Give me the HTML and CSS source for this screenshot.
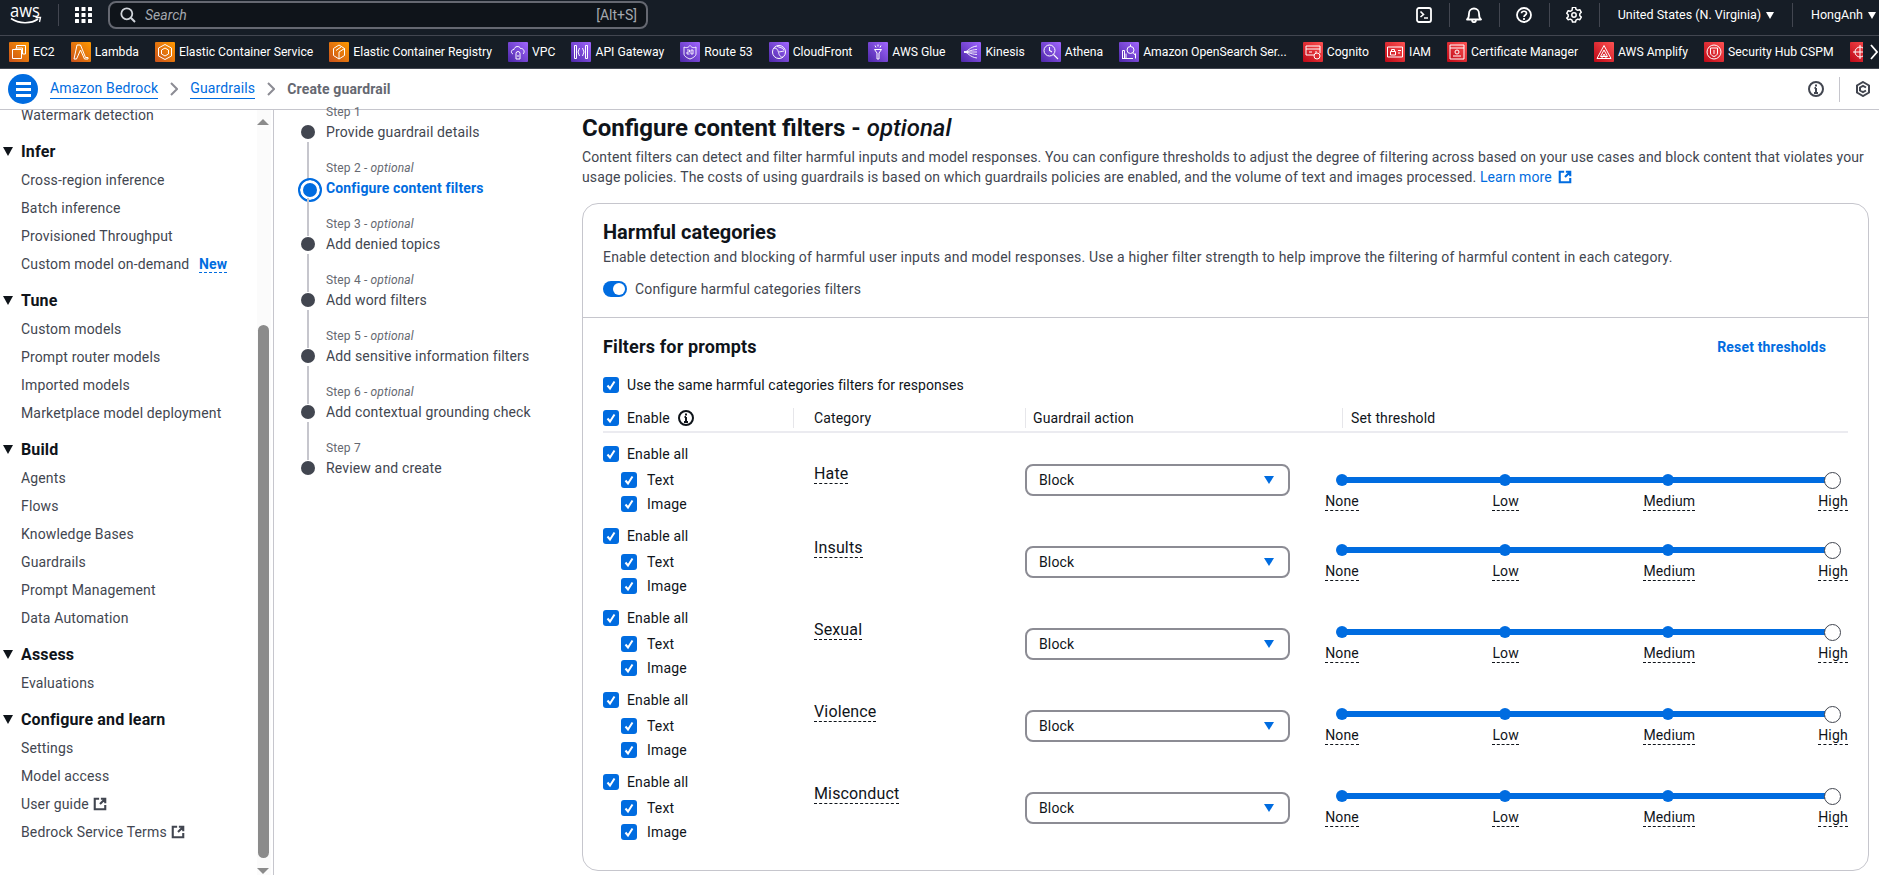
FILE: index.html
```html
<!DOCTYPE html>
<html lang="en">
<head>
    <meta charset="UTF-8">
    <meta name="viewport" content="width=device-width, initial-scale=1.0">
    <title>Create guardrail</title>
    <link rel="stylesheet" href="styles.css">
</head>
<body>
    <svg class="defs" width="0" height="0">
        <defs>
            <linearGradient id="orange" x1="0" y1="1" x2="1" y2="0"><stop offset="0" stop-color="#c8511b"/><stop offset="1" stop-color="#ff9900"/></linearGradient>
            <linearGradient id="purple" x1="0" y1="1" x2="1" y2="0"><stop offset="0" stop-color="#4d27a8"/><stop offset="1" stop-color="#a166ff"/></linearGradient>
            <linearGradient id="red" x1="0" y1="1" x2="1" y2="0"><stop offset="0" stop-color="#bd0816"/><stop offset="1" stop-color="#ff5252"/></linearGradient>
            <symbol id="check" viewBox="0 0 16 16"><rect width="16" height="16" rx="3" fill="#006ce0"/><path d="M4.500 8.500 7 11.500 11.500 4.500" fill="none" stroke="#fff" stroke-width="2"/></symbol>
            <symbol id="ext" viewBox="0 0 16 16"><path d="M7 2H2v12h12V9M9 2h5v5M14 2 8 8" fill="none" stroke="currentColor" stroke-width="2.400"/></symbol>
            <symbol id="info" viewBox="0 0 16 16"><circle cx="8" cy="8" r="7" fill="none" stroke="currentColor" stroke-width="2"/><path d="M8 7v5M6 12h4M6.500 7H8M8 3.500v2" fill="none" stroke="currentColor" stroke-width="2"/></symbol>
        </defs>
    </svg>

    <header class="topnav">
        <svg class="logo" viewBox="0 0 32 20" width="32" height="20">
            <text x="0" y="11.500" class="logo-text" textLength="30" lengthAdjust="spacingAndGlyphs">aws</text>
            <path d="M1 13.500c8 5.500 20 5.500 27 .5" fill="none" stroke="#fff" stroke-width="1.600"/>
            <path d="M25.500 12.500 30.500 12.500 29.500 17" fill="none" stroke="#fff" stroke-width="1.300"/>
        </svg>
        <span class="nav-sep"></span>
        <svg class="grid-icon" viewBox="0 0 17 16" width="17" height="16" fill="#fff">
            <rect width="4" height="4" rx=".5"/><rect x="6.500" width="4" height="4" rx=".5"/><rect x="13" width="4" height="4" rx=".5"/>
            <rect y="6" width="4" height="4" rx=".5"/><rect x="6.500" y="6" width="4" height="4" rx=".5"/><rect x="13" y="6" width="4" height="4" rx=".5"/>
            <rect y="12" width="4" height="4" rx=".5"/><rect x="6.500" y="12" width="4" height="4" rx=".5"/><rect x="13" y="12" width="4" height="4" rx=".5"/>
        </svg>
        <div class="search">
            <svg viewBox="0 0 16 16" width="16" height="16"><circle cx="6.800" cy="6.800" r="5.500" fill="none" stroke="#d1d5db" stroke-width="1.800"/><path d="M10.800 10.800 15 15" stroke="#d1d5db" stroke-width="2"/></svg>
            <span class="search-text">Search</span>
            <span class="search-key">[Alt+S]</span>
        </div>
        <div class="nav-right">
            <svg class="nav-icon" viewBox="0 0 16 16" width="16" height="16"><rect x="1" y="1" width="14" height="14" rx="2" fill="none" stroke="#fff" stroke-width="1.800"/><path d="M4.500 4.500 7.500 7.500 4.500 10M8 11h4" fill="none" stroke="#fff" stroke-width="1.600"/></svg>
            <span class="nav-sep tall"></span>
            <svg class="nav-icon" viewBox="0 0 16 16" width="16" height="16"><path d="M1 12.500c2-1.500 2-3 2-6a5 5 0 0 1 10 0c0 3 0 4.500 2 6zM6 13c0 3 4 3 4 0" fill="none" stroke="#fff" stroke-width="1.800" stroke-linejoin="round"/></svg>
            <span class="nav-sep tall"></span>
            <svg class="nav-icon" viewBox="0 0 16 16" width="16" height="16"><circle cx="8" cy="8" r="7" fill="none" stroke="#fff" stroke-width="1.800"/><path d="M5.500 6.300C5.700 3.500 10.500 3.700 10.500 6.300 10.500 8 8 8 8 10M8 11v2" fill="none" stroke="#fff" stroke-width="1.700"/></svg>
            <span class="nav-sep tall"></span>
            <svg class="nav-icon" viewBox="0 0 16 16" width="16" height="16"><path d="M6.500 1h3l.5 2 1.800 1 2-.6 1.500 2.600-1.500 1.400v2l1.500 1.400-1.500 2.600-2-.6-1.800 1-.5 2h-3l-.5-2-1.800-1-2 .6L.7 11.800l1.500-1.400v-2L.7 7 2.200 4.400l2 .6L6 4z" transform="translate(0 -.7)" fill="none" stroke="#fff" stroke-width="1.500" stroke-linejoin="round"/><circle cx="8" cy="8" r="2.200" fill="none" stroke="#fff" stroke-width="1.500"/></svg>
            <span class="nav-sep tall"></span>
            <span class="nav-label">United States (N. Virginia)</span><span class="caret"></span>
            <span class="nav-sep tall"></span>
            <span class="nav-label">HongAnh</span><span class="caret"></span>
        </div>
    </header>

    <nav class="shortcuts">
        <a class="shortcut"><svg viewBox="0 0 20 20" width="20" height="20"><rect width="20" height="20" rx="1" fill="url(#orange)"/><path d="M7.500 6V3.500h9v8.500h-3M3.500 7.500h9v9h-9zM7 7.500V6h6.500v6" fill="none" stroke="#fff" stroke-width="1"/></svg>EC2</a>
        <a class="shortcut"><svg viewBox="0 0 20 20" width="20" height="20"><rect width="20" height="20" rx="1" fill="url(#orange)"/><path d="M6 3h3.500l5 12.500H17V17h-3.500L9.500 8 5.500 17H3z" fill="none" stroke="#fff" stroke-width="1"/></svg>Lambda</a>
        <a class="shortcut"><svg viewBox="0 0 20 20" width="20" height="20"><rect width="20" height="20" rx="1" fill="url(#orange)"/><path d="M10 2.500 16.500 6v8L10 17.500 3.500 14V6zM10 6 13.500 8v4L10 14l-3.500-2V8z" fill="none" stroke="#fff" stroke-width="1"/></svg>Elastic Container Service</a>
        <a class="shortcut"><svg viewBox="0 0 20 20" width="20" height="20"><rect width="20" height="20" rx="1" fill="url(#orange)"/><path d="M10 3 15.500 6.500v7L10 17l-5.500-3.500v-7zM10 10v7M10 10l5.500-3.500M7 8.500 12 5" fill="none" stroke="#fff" stroke-width="1"/></svg>Elastic Container Registry</a>
        <a class="shortcut"><svg viewBox="0 0 20 20" width="20" height="20"><rect width="20" height="20" rx="1" fill="url(#purple)"/><path d="M5 12C2.500 11 3 7.500 6 7.500 6.500 4 11.500 3.500 12.500 6.500 15.500 6 17.500 10 15 12M8 17V11.500a2 2 0 0 1 4 0V17zM10 13v2" fill="none" stroke="#fff" stroke-width="1"/></svg>VPC</a>
        <a class="shortcut"><svg viewBox="0 0 20 20" width="20" height="20"><rect width="20" height="20" rx="1" fill="url(#purple)"/><path d="M3.500 3.500h2v13h-2zM14.500 3.500h2v13h-2zM8.500 6l-1.500 4 1.500 4M11.500 6l1.500 4-1.500 4" fill="none" stroke="#fff" stroke-width="1"/></svg>API Gateway</a>
        <a class="shortcut"><svg viewBox="0 0 20 20" width="20" height="20"><rect width="20" height="20" rx="1" fill="url(#purple)"/><path d="M4 5c2 1 4 1 6-1.500 2 2.500 4 2.500 6 1.500v7c0 2-3 4-6 5-3-1-6-3-6-5zM7 8h2.500v2H7v2h2.500M11 8h2v4h-2z" fill="none" stroke="#fff" stroke-width=".9"/></svg>Route 53</a>
        <a class="shortcut"><svg viewBox="0 0 20 20" width="20" height="20"><rect width="20" height="20" rx="1" fill="url(#purple)"/><circle cx="10" cy="10" r="6.500" fill="none" stroke="#fff"/><path d="M5 6c3 0 4 2 4.500 4.500S12 16 14 15M8 4c2 2 6 1 7 4M10 10l5-1" fill="none" stroke="#fff" stroke-width=".9"/></svg>CloudFront</a>
        <a class="shortcut"><svg viewBox="0 0 20 20" width="20" height="20"><rect width="20" height="20" rx="1" fill="url(#purple)"/><path d="M6.500 7.500h7l-2.500 3.500v6H9v-6zM10 2.500v2M7 3.500l1 2M13 3.500l-1 2" fill="none" stroke="#fff" stroke-width="1"/></svg>AWS Glue</a>
        <a class="shortcut"><svg viewBox="0 0 20 20" width="20" height="20"><rect width="20" height="20" rx="1" fill="url(#purple)"/><path d="M3 10c4 0 5-5 13-6M3 10c4 0 6-2 13-2.500M3 10h13M3 10c4 0 6 2 13 2.500M3 10c4 0 5 5 13 6" fill="none" stroke="#fff" stroke-width=".9"/></svg>Kinesis</a>
        <a class="shortcut"><svg viewBox="0 0 20 20" width="20" height="20"><rect width="20" height="20" rx="1" fill="url(#purple)"/><circle cx="8.500" cy="8.500" r="5.500" fill="none" stroke="#fff"/><path d="M12.500 12.500 17 17M8.500 5v3.500l2.500 1.500" fill="none" stroke="#fff" stroke-width="1.100"/></svg>Athena</a>
        <a class="shortcut"><svg viewBox="0 0 20 20" width="20" height="20"><rect width="20" height="20" rx="1" fill="url(#purple)"/><path d="M3.500 16.500v-8h2v8zM7 16.500v-5M14 16.500h-11M16.500 16.500v-5" fill="none" stroke="#fff"/><circle cx="11.500" cy="8" r="3.500" fill="none" stroke="#fff"/><path d="M11.500 2.500v2M14 10.500l2.500 3" fill="none" stroke="#fff"/></svg>Amazon OpenSearch Ser...</a>
        <a class="shortcut"><svg viewBox="0 0 20 20" width="20" height="20"><rect width="20" height="20" rx="1" fill="url(#red)"/><path d="M11 13H3V4h14v7M3 7h14M6 10h3M12 10h2" fill="none" stroke="#fff"/><circle cx="14" cy="14" r="3" fill="none" stroke="#fff"/></svg>Cognito</a>
        <a class="shortcut"><svg viewBox="0 0 20 20" width="20" height="20"><rect width="20" height="20" rx="1" fill="url(#red)"/><path d="M2.500 5h15v10h-15zM5.500 9.500h5V13h-5zM6.500 9.500V7.500h3v2M13 8.500h3M13 11h2" fill="none" stroke="#fff"/></svg>IAM</a>
        <a class="shortcut"><svg viewBox="0 0 20 20" width="20" height="20"><rect width="20" height="20" rx="1" fill="url(#red)"/><path d="M3 3h14v14H3zM3 6h14M6 14h8" fill="none" stroke="#fff"/><circle cx="10" cy="10" r="2" fill="none" stroke="#fff"/></svg>Certificate Manager</a>
        <a class="shortcut"><svg viewBox="0 0 20 20" width="20" height="20"><rect width="20" height="20" rx="1" fill="url(#red)"/><path d="M10 3.500 17 16.500H3zM10 8l-3.500 6.500h7zM7.500 16.500l2.500-4.500 2.500 4.500" fill="none" stroke="#fff"/></svg>AWS Amplify</a>
        <a class="shortcut"><svg viewBox="0 0 20 20" width="20" height="20"><rect width="20" height="20" rx="1" fill="url(#red)"/><circle cx="10" cy="10" r="7" fill="none" stroke="#fff"/><path d="M6.500 6h7v5c0 2-2 3-3.500 3.500C8.500 14 6.500 13 6.500 11zM10 8v4" fill="none" stroke="#fff"/></svg>Security Hub CSPM</a>
        <div class="shortcut-end">
            <svg class="shortcut-cut" viewBox="0 0 13 20" width="13" height="20"><rect width="20" height="20" rx="1" fill="url(#red)"/><circle cx="10" cy="10" r="5" fill="none" stroke="#fff"/><path d="M3 10h14M10 3v14" fill="none" stroke="#fff"/></svg>
            <svg class="shortcut-next" viewBox="0 0 8 16" width="8" height="16"><path d="M1 1l6 7-6 7" fill="none" stroke="#fff" stroke-width="1.800"/></svg>
        </div>
    </nav>

    <div class="crumbbar">
        <button class="menu-btn"><span></span><span></span><span></span></button>
        <a class="crumb">Amazon Bedrock</a>
        <svg class="crumb-sep" viewBox="0 0 8 14" width="8" height="14"><path d="M1 1l6 6-6 6" fill="none" stroke="#8c8c94" stroke-width="2"/></svg>
        <a class="crumb">Guardrails</a>
        <svg class="crumb-sep" viewBox="0 0 8 14" width="8" height="14"><path d="M1 1l6 6-6 6" fill="none" stroke="#8c8c94" stroke-width="2"/></svg>
        <span class="crumb-current">Create guardrail</span>
        <div class="crumb-tools">
            <svg class="tool-icon" width="16" height="16"><use href="#info"/></svg>
            <span class="tool-sep"></span>
            <svg class="tool-icon" viewBox="0 0 16 16" width="16" height="16"><path d="M8 1 14 4.500v7L8 15l-6-3.500v-7z" fill="none" stroke="currentColor" stroke-width="2"/><path d="M11 6.500 8 4.800 5 6.500v3L8 11.200l3-1.700" fill="none" stroke="currentColor" stroke-width="2"/></svg>
        </div>
    </div>

    <div class="layout">
        <aside class="sidebar">
            <div class="side-scroll">
                <a class="side-item">Watermark detection</a>
                <h3 class="side-head">Infer</h3>
                <a class="side-item">Cross-region inference</a>
                <a class="side-item">Batch inference</a>
                <a class="side-item">Provisioned Throughput</a>
                <a class="side-item">Custom model on-demand <span class="new-tag">New</span></a>
                <h3 class="side-head">Tune</h3>
                <a class="side-item">Custom models</a>
                <a class="side-item">Prompt router models</a>
                <a class="side-item">Imported models</a>
                <a class="side-item">Marketplace model deployment</a>
                <h3 class="side-head">Build</h3>
                <a class="side-item">Agents</a>
                <a class="side-item">Flows</a>
                <a class="side-item">Knowledge Bases</a>
                <a class="side-item">Guardrails</a>
                <a class="side-item">Prompt Management</a>
                <a class="side-item">Data Automation</a>
                <h3 class="side-head">Assess</h3>
                <a class="side-item">Evaluations</a>
                <h3 class="side-head">Configure and learn</h3>
                <a class="side-item">Settings</a>
                <a class="side-item">Model access</a>
                <a class="side-item">User guide <svg class="ext-icon" width="14" height="14"><use href="#ext"/></svg></a>
                <a class="side-item">Bedrock Service Terms <svg class="ext-icon" width="14" height="14"><use href="#ext"/></svg></a>
            </div>
            <div class="scrollbar">
                <span class="scroll-up"></span>
                <span class="scroll-thumb"></span>
                <span class="scroll-down"></span>
            </div>
        </aside>

        <ol class="steps">
            <li class="step"><small>Step 1</small><div class="step-title">Provide guardrail details</div></li>
            <li class="step active"><small>Step 2 - <i>optional</i></small><div class="step-title">Configure content filters</div></li>
            <li class="step"><small>Step 3 - <i>optional</i></small><div class="step-title">Add denied topics</div></li>
            <li class="step"><small>Step 4 - <i>optional</i></small><div class="step-title">Add word filters</div></li>
            <li class="step"><small>Step 5 - <i>optional</i></small><div class="step-title">Add sensitive information filters</div></li>
            <li class="step"><small>Step 6 - <i>optional</i></small><div class="step-title">Add contextual grounding check</div></li>
            <li class="step last-step"><small>Step 7</small><div class="step-title">Review and create</div></li>
        </ol>

        <main class="content">
            <h1 class="page-title">Configure content filters - <i>optional</i></h1>
            <p class="page-desc">Content filters can detect and filter harmful inputs and model responses. You can configure thresholds to adjust the degree of filtering across based on your use cases and block content that violates your usage policies. The costs of using guardrails is based on which guardrails policies are enabled, and the volume of text and images processed. <a class="learn">Learn more <svg width="14" height="14"><use href="#ext"/></svg></a></p>

            <section class="card">
                <div class="card-top">
                    <h2 class="card-title">Harmful categories</h2>
                    <p class="card-desc">Enable detection and blocking of harmful user inputs and model responses. Use a higher filter strength to help improve the filtering of harmful content in each category.</p>
                    <div class="toggle-row"><span class="toggle"></span>Configure harmful categories filters</div>
                </div>
                <div class="card-body">
                    <div class="filters-head">
                        <h3 class="filters-title">Filters for prompts</h3>
                        <a class="reset">Reset thresholds</a>
                    </div>
                    <div class="check same"><svg class="cb" width="16" height="16"><use href="#check"/></svg>Use the same harmful categories filters for responses</div>
                    <div class="table-head">
                        <div class="check th-enable"><svg class="cb" width="16" height="16"><use href="#check"/></svg>Enable <svg class="th-info" width="16" height="16"><use href="#info"/></svg></div>
                        <div class="th-cell th-cat">Category</div>
                        <div class="th-cell th-act">Guardrail action</div>
                        <div class="th-cell th-set">Set threshold</div>
                    </div>

                    <div class="row row-first">
                        <div class="enable-col">
                            <div class="check"><svg class="cb" width="16" height="16"><use href="#check"/></svg>Enable all</div>
                            <div class="check sub"><svg class="cb" width="16" height="16"><use href="#check"/></svg>Text</div>
                            <div class="check sub"><svg class="cb" width="16" height="16"><use href="#check"/></svg>Image</div>
                        </div>
                        <div class="cat-col"><span class="dotted">Hate</span></div>
                        <div class="select">Block<span class="select-arrow"></span></div>
                        <div class="slider">
                            <div class="track"><span class="tick"></span><span class="tick"></span><span class="tick"></span><span class="knob"></span></div>
                            <div class="ticks"><span class="tick-label"><span class="dotted">None</span></span><span class="tick-label"><span class="dotted">Low</span></span><span class="tick-label"><span class="dotted">Medium</span></span><span class="tick-label"><span class="dotted">High</span></span></div>
                        </div>
                    </div>
                    <div class="row">
                        <div class="enable-col">
                            <div class="check"><svg class="cb" width="16" height="16"><use href="#check"/></svg>Enable all</div>
                            <div class="check sub"><svg class="cb" width="16" height="16"><use href="#check"/></svg>Text</div>
                            <div class="check sub"><svg class="cb" width="16" height="16"><use href="#check"/></svg>Image</div>
                        </div>
                        <div class="cat-col"><span class="dotted">Insults</span></div>
                        <div class="select">Block<span class="select-arrow"></span></div>
                        <div class="slider">
                            <div class="track"><span class="tick"></span><span class="tick"></span><span class="tick"></span><span class="knob"></span></div>
                            <div class="ticks"><span class="tick-label"><span class="dotted">None</span></span><span class="tick-label"><span class="dotted">Low</span></span><span class="tick-label"><span class="dotted">Medium</span></span><span class="tick-label"><span class="dotted">High</span></span></div>
                        </div>
                    </div>
                    <div class="row">
                        <div class="enable-col">
                            <div class="check"><svg class="cb" width="16" height="16"><use href="#check"/></svg>Enable all</div>
                            <div class="check sub"><svg class="cb" width="16" height="16"><use href="#check"/></svg>Text</div>
                            <div class="check sub"><svg class="cb" width="16" height="16"><use href="#check"/></svg>Image</div>
                        </div>
                        <div class="cat-col"><span class="dotted">Sexual</span></div>
                        <div class="select">Block<span class="select-arrow"></span></div>
                        <div class="slider">
                            <div class="track"><span class="tick"></span><span class="tick"></span><span class="tick"></span><span class="knob"></span></div>
                            <div class="ticks"><span class="tick-label"><span class="dotted">None</span></span><span class="tick-label"><span class="dotted">Low</span></span><span class="tick-label"><span class="dotted">Medium</span></span><span class="tick-label"><span class="dotted">High</span></span></div>
                        </div>
                    </div>
                    <div class="row">
                        <div class="enable-col">
                            <div class="check"><svg class="cb" width="16" height="16"><use href="#check"/></svg>Enable all</div>
                            <div class="check sub"><svg class="cb" width="16" height="16"><use href="#check"/></svg>Text</div>
                            <div class="check sub"><svg class="cb" width="16" height="16"><use href="#check"/></svg>Image</div>
                        </div>
                        <div class="cat-col"><span class="dotted">Violence</span></div>
                        <div class="select">Block<span class="select-arrow"></span></div>
                        <div class="slider">
                            <div class="track"><span class="tick"></span><span class="tick"></span><span class="tick"></span><span class="knob"></span></div>
                            <div class="ticks"><span class="tick-label"><span class="dotted">None</span></span><span class="tick-label"><span class="dotted">Low</span></span><span class="tick-label"><span class="dotted">Medium</span></span><span class="tick-label"><span class="dotted">High</span></span></div>
                        </div>
                    </div>
                    <div class="row">
                        <div class="enable-col">
                            <div class="check"><svg class="cb" width="16" height="16"><use href="#check"/></svg>Enable all</div>
                            <div class="check sub"><svg class="cb" width="16" height="16"><use href="#check"/></svg>Text</div>
                            <div class="check sub"><svg class="cb" width="16" height="16"><use href="#check"/></svg>Image</div>
                        </div>
                        <div class="cat-col"><span class="dotted">Misconduct</span></div>
                        <div class="select">Block<span class="select-arrow"></span></div>
                        <div class="slider">
                            <div class="track"><span class="tick"></span><span class="tick"></span><span class="tick"></span><span class="knob"></span></div>
                            <div class="ticks"><span class="tick-label"><span class="dotted">None</span></span><span class="tick-label"><span class="dotted">Low</span></span><span class="tick-label"><span class="dotted">Medium</span></span><span class="tick-label"><span class="dotted">High</span></span></div>
                        </div>
                    </div>
                </div>
            </section>
        </main>
    </div>
</body>
</html>
```

FILE: styles.css
```css
* {
    box-sizing: border-box;
}
html, body {
    height: 100%;
    overflow: hidden;
}
body {
    margin: 0;
    background-color: white;
    color: #0f141a;
    font-family: Roboto, "Noto Sans", sans-serif;
    font-size: 14px;
    line-height: 20px;
    letter-spacing: .15px;
}
.defs {
    position: absolute;
}

/* top nav */
.topnav {
    height: 35px;
    padding-bottom: 5px;
    background-color: #161d26;
    display: flex;
    align-items: center;
    color: white;
    letter-spacing: 0;
}
.logo {
    margin-left: 10px;
    flex: none;
    overflow: visible;
}
.logo-text {
    fill: white;
    font-size: 19px;
    font-family: "Open Sans", sans-serif;
}
.nav-sep {
    width: 1px;
    height: 22px;
    background-color: #424650;
    margin-left: 16px;
    flex: none;
}
.nav-sep.tall {
    margin: 0;
    height: 24px;
}
.grid-icon {
    margin-left: 16px;
    flex: none;
}
.search {
    margin-left: 16px;
    width: 540px;
    height: 28px;
    border: 2px solid #656871;
    border-radius: 8px;
    background-color: #0f141a;
    display: flex;
    align-items: center;
    padding: 0 9px 0 10px;
    color: #a4a8ae;
}
.search-text {
    margin-left: 9px;
    font-style: italic;
    flex: 1;
}
.nav-right {
    margin-left: auto;
    display: flex;
    align-items: center;
    height: 100%;
}
.nav-icon {
    margin: 0 16.500px;
    flex: none;
}
.nav-label {
    font-size: 12.500px;
    margin-left: 18px;
    margin-right: 5px;
}
.caret {
    width: 0;
    height: 0;
    border-left: 4.500px solid transparent;
    border-right: 4.500px solid transparent;
    border-top: 7px solid white;
    margin-right: 18px;
}
.caret:last-child {
    margin-right: 3px;
}

/* favourites bar */
.shortcuts {
    height: 34px;
    background-color: #161d26;
    border-top: 1px solid #424650;
    border-bottom: 1px solid #424650;
    display: flex;
    align-items: center;
    padding-left: 9px;
    gap: 16px;
    color: white;
    font-size: 12.200px;
    letter-spacing: 0;
    white-space: nowrap;
    overflow: hidden;
}
.shortcut {
    display: flex;
    align-items: center;
    gap: 4px;
}
.shortcut svg {
    flex: none;
}
.shortcut-end {
    display: flex;
    align-items: center;
    gap: 7px;
}

/* breadcrumbs */
.crumbbar {
    height: 41px;
    border-bottom: 1px solid #c6c6cd;
    display: flex;
    align-items: center;
    padding-left: 8px;
    color: #424650;
}
.menu-btn {
    width: 30px;
    height: 30px;
    padding: 0;
    border: none;
    border-radius: 50%;
    background-color: #006ce0;
    display: flex;
    flex-direction: column;
    align-items: center;
    justify-content: center;
    gap: 3px;
    margin-right: 12px;
}
.menu-btn span {
    width: 15px;
    height: 3px;
    background-color: white;
}
.crumb {
    color: #006ce0;
    border-bottom: 1px solid #006ce0;
    line-height: 19px;
}
.crumb-sep {
    margin: 0 12px;
}
.crumb-current {
    font-weight: 700;
    color: #656871;
}
.crumb-tools {
    margin-left: auto;
    display: flex;
    align-items: center;
    color: #424650;
}
.tool-sep {
    width: 1px;
    height: 25px;
    background-color: #c6c6cd;
    margin: 0 15px;
}
.tool-icon:last-child {
    margin-right: 8px;
}

/* page layout */
.layout {
    display: flex;
    height: 765px;
}
.sidebar {
    width: 274px;
    flex: none;
    border-right: 1px solid #c6c6cd;
    display: flex;
    overflow: hidden;
    height: 100%;
    position: relative;
}
.side-scroll {
    flex: 1;
    padding-left: 21px;
    margin-top: -9px;
    color: #424650;
}
.side-item {
    display: block;
    height: 28px;
    line-height: 28px;
    white-space: nowrap;
}
.side-head {
    margin: 7px 0 0;
    height: 30px;
    line-height: 32px;
    font-size: 16px;
    font-weight: 700;
    color: #0f141a;
    position: relative;
}
.side-head::before {
    content: "";
    position: absolute;
    left: -18px;
    top: 11px;
    border-left: 5px solid transparent;
    border-right: 5px solid transparent;
    border-top: 9px solid #0f141a;
}
.new-tag {
    color: #006ce0;
    font-weight: 700;
    border-bottom: 1px dashed #006ce0;
    margin-left: 6px;
}
.ext-icon {
    vertical-align: -2px;
    margin-left: 1px;
}
.scrollbar {
    position: absolute;
    top: 0;
    bottom: 0;
    left: 257px;
    width: 14px;
    background-color: #fbfbfb;
}
.scroll-thumb {
    position: absolute;
    left: 1px;
    top: 215px;
    width: 11px;
    height: 533px;
    background-color: #8b8b8b;
    border-radius: 6px;
}
.scroll-up, .scroll-down {
    position: absolute;
    left: 0;
    border-left: 6.500px solid transparent;
    border-right: 6.500px solid transparent;
}
.scroll-up {
    top: 9px;
    border-bottom: 6px solid #8b8b8b;
}
.scroll-down {
    bottom: 1px;
    border-top: 6px solid #8b8b8b;
}

/* wizard steps */
.steps {
    list-style: none;
    margin: -6px 0 0;
    padding: 0;
    width: 308px;
    flex: none;
}
.step {
    height: 56px;
    padding-left: 52px;
    position: relative;
    color: #424650;
}
.step small {
    display: block;
    font-size: 12px;
    line-height: 16px;
    color: #656871;
}
.step-title {
    line-height: 20px;
    margin-top: 2px;
    white-space: nowrap;
}
.step::before {
    content: "";
    position: absolute;
    left: 27px;
    top: 21px;
    width: 14px;
    height: 14px;
    border-radius: 50%;
    background-color: #424650;
}
.step::after {
    content: "";
    position: absolute;
    left: 33px;
    top: 38px;
    width: 2px;
    height: 38px;
    background-color: #c6c6cd;
}
.last-step::after {
    display: none;
}
.step.active .step-title {
    color: #006ce0;
    font-weight: 700;
}
.step.active::before {
    left: 24px;
    top: 18px;
    width: 20px;
    height: 20px;
    background-color: #006ce0;
    border: 2px solid #006ce0;
    box-shadow: inset 0 0 0 3px white;
}

/* main */
.content {
    flex: 1;
    padding-right: 10px;
    min-width: 0;
}
.page-title {
    margin: 4px 0 0;
    font-size: 24px;
    line-height: 28px;
    font-weight: 700;
    letter-spacing: 0;
}
.page-title i {
    font-weight: 500;
}
.page-desc {
    margin: 5px 0 0;
    color: #424650;
    letter-spacing: .12px;
}
.learn {
    color: #006ce0;
}
.learn svg {
    vertical-align: -2px;
    margin-left: 2px;
}
.card {
    margin-top: 16px;
    border: 1px solid #c6c6cd;
    border-radius: 16px;
    height: 668px;
}
.card-top {
    padding: 16px 20px 0;
    height: 114px;
    border-bottom: 1px solid #c6c6cd;
}
.card-title {
    margin: 0;
    font-size: 20px;
    line-height: 24px;
    font-weight: 700;
    letter-spacing: 0;
}
.card-desc {
    margin: 3px 0 0;
    color: #424650;
    letter-spacing: .19px;
}
.toggle-row {
    display: flex;
    align-items: center;
    gap: 8px;
    margin-top: 12px;
    color: #424650;
}
.toggle {
    width: 24px;
    height: 16px;
    border-radius: 8px;
    background-color: #006ce0;
    position: relative;
}
.toggle::after {
    content: "";
    position: absolute;
    right: 2px;
    top: 2px;
    width: 12px;
    height: 12px;
    border-radius: 50%;
    background-color: white;
}
.card-body {
    padding: 0 20px;
}
.filters-head {
    display: flex;
    justify-content: space-between;
    align-items: center;
    height: 56px;
    padding-top: 1px;
}
.filters-title {
    margin: 0;
    font-size: 18px;
    font-weight: 700;
}
.reset {
    color: #006ce0;
    font-weight: 700;
    margin-right: 22px;
}
.check {
    display: flex;
    align-items: center;
    gap: 8px;
    height: 22px;
    white-space: nowrap;
}
.same {
    letter-spacing: .05px;
}
.cb {
    flex: none;
}
.table-head {
    display: flex;
    align-items: center;
    height: 32px;
    margin-top: 5px;
    border-bottom: 2px solid #ebebf0;
    padding-top: 3px;
}
.th-enable {
    width: 190px;
}
.th-info {
    color: #0f141a;
}
.th-cell {
    border-left: 1px solid #e6e6ea;
    height: 20px;
    padding-left: 20px;
}
.th-cat {
    width: 232px;
}
.th-act {
    width: 317px;
    padding-left: 7px;
}
.th-set {
    padding-left: 8px;
}
.row {
    display: flex;
    height: 82px;
}
.row-first {
    padding-top: 10px;
    height: 92px;
}
.enable-col {
    width: 211px;
    flex: none;
}
.sub {
    margin-left: 18px;
    margin-top: 4px;
    gap: 10px;
}
.sub + .sub {
    margin-top: 2px;
}
.cat-col {
    width: 211px;
    flex: none;
    padding-top: 13px;
    font-size: 16px;
}
.row-first .cat-col {
    padding-top: 21px;
}
.dotted {
    border-bottom: 1px dashed #0f141a;
    display: inline-block;
    line-height: 18px;
}
.select {
    width: 265px;
    flex: none;
    height: 32px;
    margin-top: 21px;
    border: 2px solid #8c8c94;
    border-radius: 8px;
    display: flex;
    align-items: center;
    justify-content: space-between;
    padding: 0 14px 0 12px;
}
.select-arrow {
    width: 0;
    height: 0;
    border-left: 5px solid transparent;
    border-right: 5px solid transparent;
    border-top: 8px solid #006ce0;
}
.slider {
    width: 544px;
    margin-left: 15px;
    padding-top: 22px;
    flex: none;
}
.row-first .slider {
    padding-top: 34px;
}
.track {
    height: 6px;
    margin: 0 16px 0 37px;
    background-color: #006ce0;
    border-radius: 3px;
    display: flex;
    justify-content: space-between;
    align-items: center;
}
.tick {
    width: 12px;
    height: 12px;
    border-radius: 50%;
    background-color: #006ce0;
    flex: none;
}
.tick:first-child {
    margin-left: -6px;
}
.knob {
    width: 17px;
    height: 17px;
    border-radius: 50%;
    background-color: white;
    border: 1.500px solid #424650;
    margin-right: -8.500px;
    flex: none;
}
.ticks {
    display: flex;
    justify-content: space-between;
    margin: 9px 16px 0 37px;
}
.tick-label {
    width: 0;
    display: flex;
    justify-content: center;
    white-space: nowrap;
}
```
